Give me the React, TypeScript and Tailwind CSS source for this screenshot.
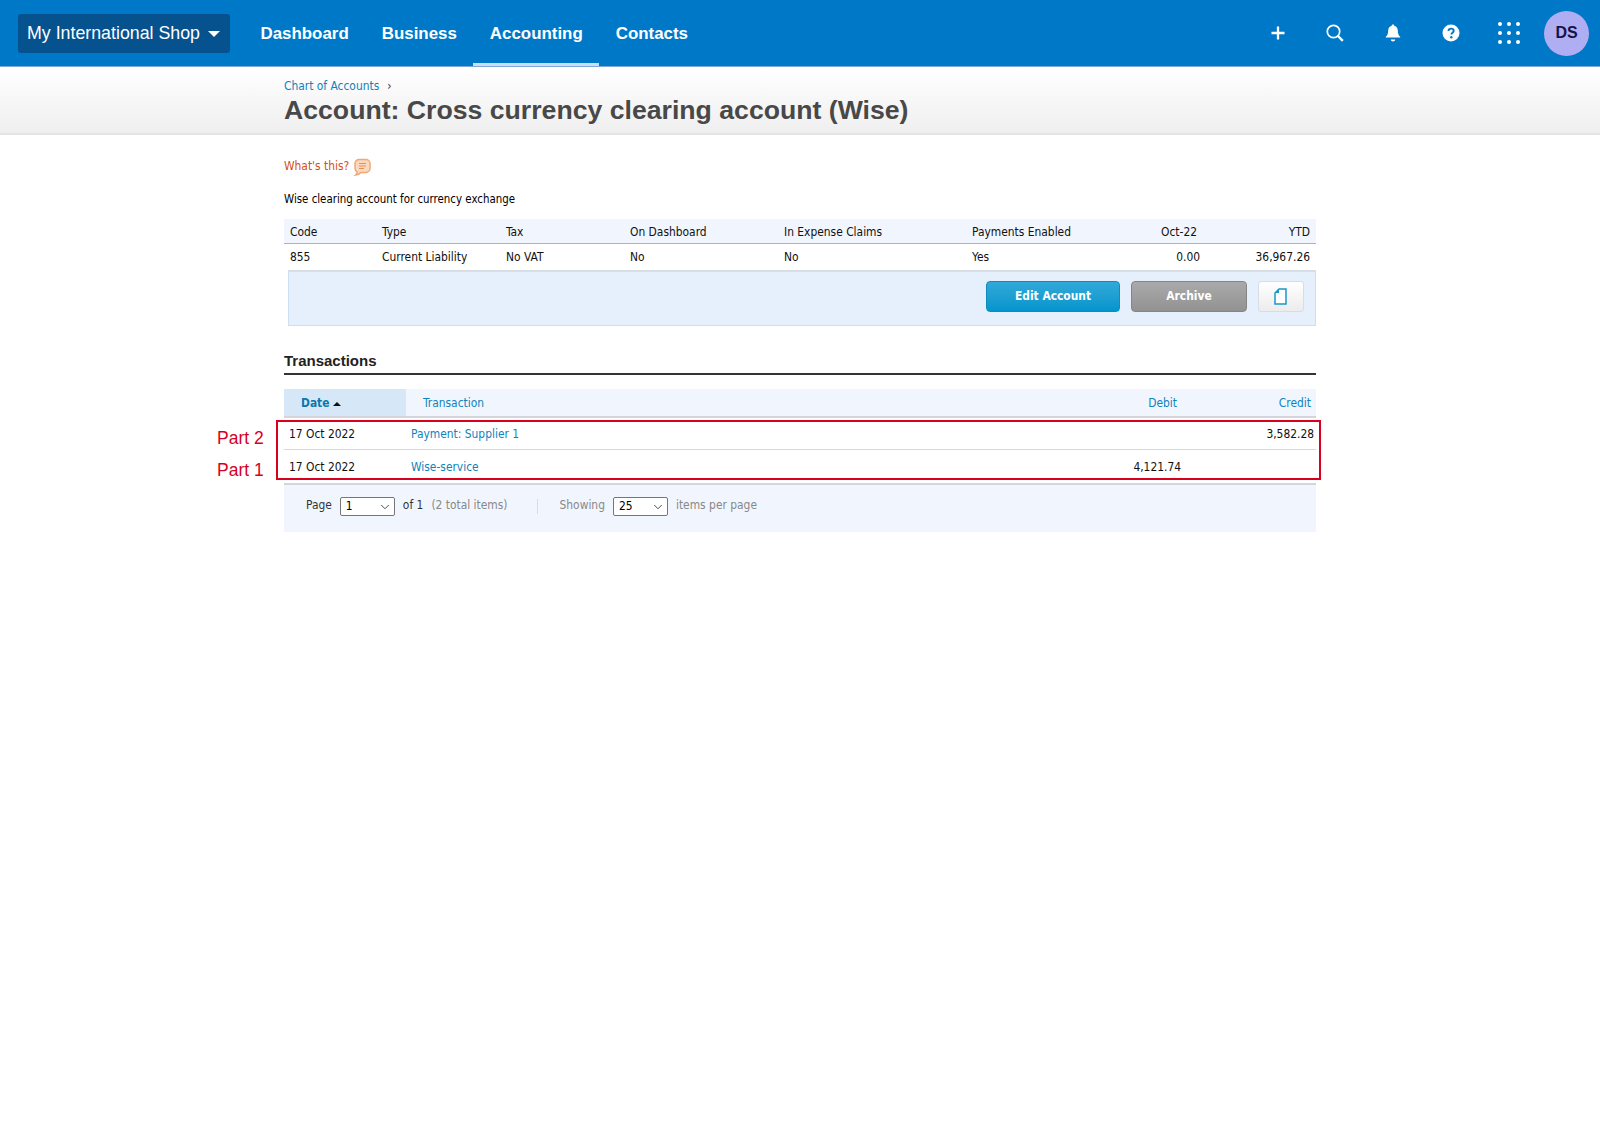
import { ChevronDown } from "lucide-react";

const body = "font-['DejaVu_Sans',sans-serif] text-[11.9px] [font-stretch:condensed]";
const navItems = ["Dashboard", "Business", "Accounting", "Contacts"];

function PlusIcon() {
  return (
    <svg viewBox="0 0 16 16" className="h-[16px] w-[16px]">
      <path d="M8 1.5v13M1.5 8h13" fill="none" stroke="#fff" strokeWidth="2.3" />
    </svg>
  );
}

function SearchIcon() {
  return (
    <svg viewBox="0 0 18 18" className="h-[18px] w-[18px]">
      <circle cx="7.5" cy="7.5" r="6.2" fill="none" stroke="#fff" strokeWidth="1.7" />
      <path d="M12 12l4.8 4.8" fill="none" stroke="#fff" strokeWidth="2.4" />
    </svg>
  );
}

function BellIcon() {
  return (
    <svg viewBox="0 0 16 18" className="h-[18px] w-[16px]">
      <path d="M8 .5c.8 0 1.3.5 1.3 1.3 2.3.6 3.5 2.5 3.500 5 0 3 .8 4.600 2.400 6v.8H.8v-.8c1.600-1.400 2.400-3 2.400-6 0-2.500 1.200-4.400 3.500-5C6.700 1 7.200.5 8 .5Z" fill="#fff" />
      <path d="M5.800 15.500h4.400a2.200 2 0 0 1-4.400 0Z" fill="#fff" />
    </svg>
  );
}

function HelpIcon() {
  return (
    <svg viewBox="0 0 18 18" className="h-[18px] w-[18px]">
      <circle cx="9" cy="9" r="8.5" fill="#fff" />
      <path d="M6.4 7c.2-1.600 1.300-2.400 2.700-2.400 1.500 0 2.600.9 2.600 2.200 0 1.900-2.300 2-2.300 3.700" fill="none" stroke="#0078c8" strokeWidth="1.9" />
      <circle cx="9.3" cy="13.2" r="1.2" fill="#0078c8" />
    </svg>
  );
}

function AppsIcon() {
  return (
    <div className="grid grid-cols-3 gap-[4.5px]">
      {Array.from({ length: 9 }).map((_, i) => (
        <span key={i} className="h-[4.5px] w-[4.5px] rounded-full bg-white" />
      ))}
    </div>
  );
}

function TopBar() {
  return (
    <header className="flex h-[67px] items-center border-b border-[#7fa9dc] bg-[#0078c8] pl-[18px] pr-[11px] font-['Liberation_Sans',sans-serif] text-white">
      <button className="flex h-[39px] w-[212px] items-center gap-[8px] rounded-[3px] bg-[#05528f] pl-[9px] pt-[1px] text-[17.8px]">
        My International Shop
        <span className="h-0 w-0 border-x-[6px] border-t-[6px] border-x-transparent border-t-white" />
      </button>
      <nav className="ml-[14px] flex h-full">
        {navItems.map((item) => (
          <a
            key={item}
            className={`flex items-center border-b-[3px] px-[16.5px] pt-[5px] text-[16.9px] font-bold ${
              item === "Accounting" ? "border-[#c9ddf3]" : "border-transparent"
            }`}
          >
            {item}
          </a>
        ))}
      </nav>
      <div className="ml-auto flex items-center">
        <div className="flex w-[56px] justify-center"><PlusIcon /></div>
        <div className="flex w-[58px] justify-center"><SearchIcon /></div>
        <div className="flex w-[58px] justify-center"><BellIcon /></div>
        <div className="flex w-[58px] justify-center"><HelpIcon /></div>
        <div className="flex w-[58px] justify-center"><AppsIcon /></div>
        <div className="ml-[6px] flex h-[45px] w-[45px] items-center justify-center rounded-full bg-[#b0aef2] text-[16px] font-bold text-[#16124a]">
          DS
        </div>
      </div>
    </header>
  );
}

function PageTitle() {
  return (
    <div className="h-[68px] border-b-2 border-[#e4e4e4] bg-gradient-to-b from-white to-[#efefef]">
      <div className="mx-auto w-[1032px] pt-[11px]">
        <div className={`${body} flex items-center gap-[8px] leading-[16px] text-[#0f83bb]`}>
          Chart of Accounts <span className="text-[#333]">›</span>
        </div>
        <h1 className="mt-[1px] font-['Liberation_Sans',sans-serif] text-[26.65px] font-bold leading-[31px] text-[#484848]">
          Account: Cross currency clearing account (Wise)
        </h1>
      </div>
    </div>
  );
}

function AccountSummary() {
  return (
    <>
      <div className="flex items-center gap-[4px] text-[#d4500f]">
        What's this?
        <svg viewBox="0 0 18 18" className="h-[18px] w-[18px]">
          <path d="M6 1.500h7a4 4 0 0 1 4 4v5a4 4 0 0 1-4 4H8c-1.300 1.500-3 2.300-5.500 2.500 1-.9 1.600-1.800 1.800-3A4 4 0 0 1 2 10.500v-5a4 4 0 0 1 4-4Z" fill="#fbd9be" stroke="#f0a877" strokeWidth="1.500" />
          <path d="M6 5.500h7M6 8h7M6 10.500h5" stroke="#e88f52" strokeWidth="1.100" />
        </svg>
      </div>
      <p className="mt-[15px] text-[11.4px] leading-[16px] text-black">Wise clearing account for currency exchange</p>

      <div className="mt-[12px] grid grid-cols-[92px_124px_124px_154px_188px_140px_100px_110px]">
        <div className="contents [&>div]:flex [&>div]:h-[25px] [&>div]:items-center [&>div]:border-b [&>div]:border-[#a5b4c6] [&>div]:bg-[#f1f6fe] [&>div]:pl-[6px] [&>div]:pt-[3px]">
          <div>Code</div>
          <div>Type</div>
          <div>Tax</div>
          <div>On Dashboard</div>
          <div>In Expense Claims</div>
          <div>Payments Enabled</div>
          <div className="justify-end pr-[9px]">Oct-22</div>
          <div className="justify-end pr-[6px]">YTD</div>
        </div>
        <div className="contents [&>div]:flex [&>div]:h-[26px] [&>div]:items-center [&>div]:pl-[6px] [&>div]:pt-[2px]">
          <div>855</div>
          <div>Current Liability</div>
          <div>No VAT</div>
          <div>No</div>
          <div>No</div>
          <div>Yes</div>
          <div className="justify-end pr-[6px]">0.00</div>
          <div className="justify-end pr-[6px]">36,967.26</div>
        </div>
      </div>

      <div className="ml-[4px] flex h-[56px] items-center justify-end gap-[11px] border border-t-2 border-[#cfdff2] border-t-[#d8dee6] bg-[#e6f0fd] pb-[4px] pr-[11px]">
        <button className="h-[31px] w-[134px] rounded-[4px] border border-[#0d8dbf] bg-gradient-to-b from-[#2fa9d8] to-[#0095cd] font-bold text-white">
          Edit Account
        </button>
        <button className="h-[31px] w-[116px] rounded-[4px] border border-[#858585] bg-gradient-to-b from-[#aaaaaa] to-[#929292] font-bold text-white">
          Archive
        </button>
        <button className="flex h-[31px] w-[46px] items-center justify-center rounded-[3px] border border-[#d6dde4] bg-gradient-to-b from-white to-[#ececec] pr-[2px]">
          <svg viewBox="0 0 13 17" className="h-[17px] w-[13px]">
            <path d="M1 16V5l4-4h7v15Z" fill="#fff" stroke="#1b97c7" strokeWidth="1.500" />
            <path d="M5 1v4H1Z" fill="#1b97c7" />
          </svg>
        </button>
      </div>
    </>
  );
}

function PageSelect({ value }: { value: string }) {
  return (
    <div className="flex h-[19px] w-[55px] items-center justify-between rounded-[2px] border border-[#767676] bg-white pl-[5px] pr-[2px] pt-[1px] text-black">
      {value}
      <ChevronDown size={14} strokeWidth={1.5} className="text-[#333]" />
    </div>
  );
}

function Transactions() {
  return (
    <>
      <h2 className="mt-[26px] border-b-2 border-[#333] pb-[3px] font-['Liberation_Sans',sans-serif] text-[15px] font-bold leading-[18px] text-[#222]">
        Transactions
      </h2>

      <div className="mt-[14px] grid h-[29px] grid-cols-[122px_1fr_130px_130px] border-b-2 border-[#d3d7dc] bg-[#f1f6fe] pt-0 text-[#0f83bb]">
        <div className="flex items-center gap-[4px] bg-[#d6e8f7] pl-[17px] pt-[2px] font-bold text-[#0a78ad]">
          Date
          <span className="h-0 w-0 border-x-[4px] border-b-[4px] border-x-transparent border-b-[#111]" />
        </div>
        <div className="flex items-center pl-[17px] pt-[2px]">Transaction</div>
        <div className="flex items-center justify-end pr-[9px] pt-[2px]">Debit</div>
        <div className="flex items-center justify-end pr-[5px] pt-[2px]">Credit</div>
      </div>

      <div className="relative">
        <div className="grid h-[32px] grid-cols-[122px_1fr_130px_130px] items-center border-b border-[#d8d8d8] pt-[2px]">
          <div className="pl-[5px]">17 Oct 2022</div>
          <a className="pl-[5px] text-[#0f83bb]">Payment: Supplier 1</a>
          <div />
          <div className="pr-[2px] text-right">3,582.28</div>
        </div>
        <div className="grid h-[33px] grid-cols-[122px_1fr_130px_130px] items-center pt-[3px]">
          <div className="pl-[5px]">17 Oct 2022</div>
          <a className="pl-[5px] text-[#0f83bb]">Wise-service</a>
          <div className="pr-[5px] text-right">4,121.74</div>
          <div />
        </div>
        <div className="absolute -left-[8px] -right-[5px] top-[2px] h-[60px] border-2 border-[#d8001f]" />
        <span className="absolute -left-[67px] top-[10px] font-['Liberation_Sans',sans-serif] text-[17.5px] leading-[20px] text-[#d8001f]">Part 2</span>
        <span className="absolute -left-[67px] top-[42px] font-['Liberation_Sans',sans-serif] text-[17.5px] leading-[20px] text-[#d8001f]">Part 1</span>
      </div>

      <div className="flex h-[49px] items-center border-t-2 border-[#d3d7dc] bg-[#f1f6fe] pb-[5px] pl-[22px] text-[#333]">
        <span>Page</span>
        <div className="ml-[8px]"><PageSelect value="1" /></div>
        <span className="ml-[8px]">of 1</span>
        <span className="ml-[8px] text-[#888]">(2 total items)</span>
        <span className="ml-[29px] mr-[22px] h-[15px] w-px bg-[#d5dde8]" />
        <span className="text-[#888]">Showing</span>
        <div className="ml-[8px]"><PageSelect value="25" /></div>
        <span className="ml-[8px] text-[#888]">items per page</span>
      </div>
    </>
  );
}

export default function App() {
  return (
    <div className="min-h-[1138px] bg-white">
      <TopBar />
      <PageTitle />
      <main className={`${body} mx-auto w-[1032px] pt-[23px] text-[#111]`}>
        <AccountSummary />
        <Transactions />
      </main>
    </div>
  );
}
